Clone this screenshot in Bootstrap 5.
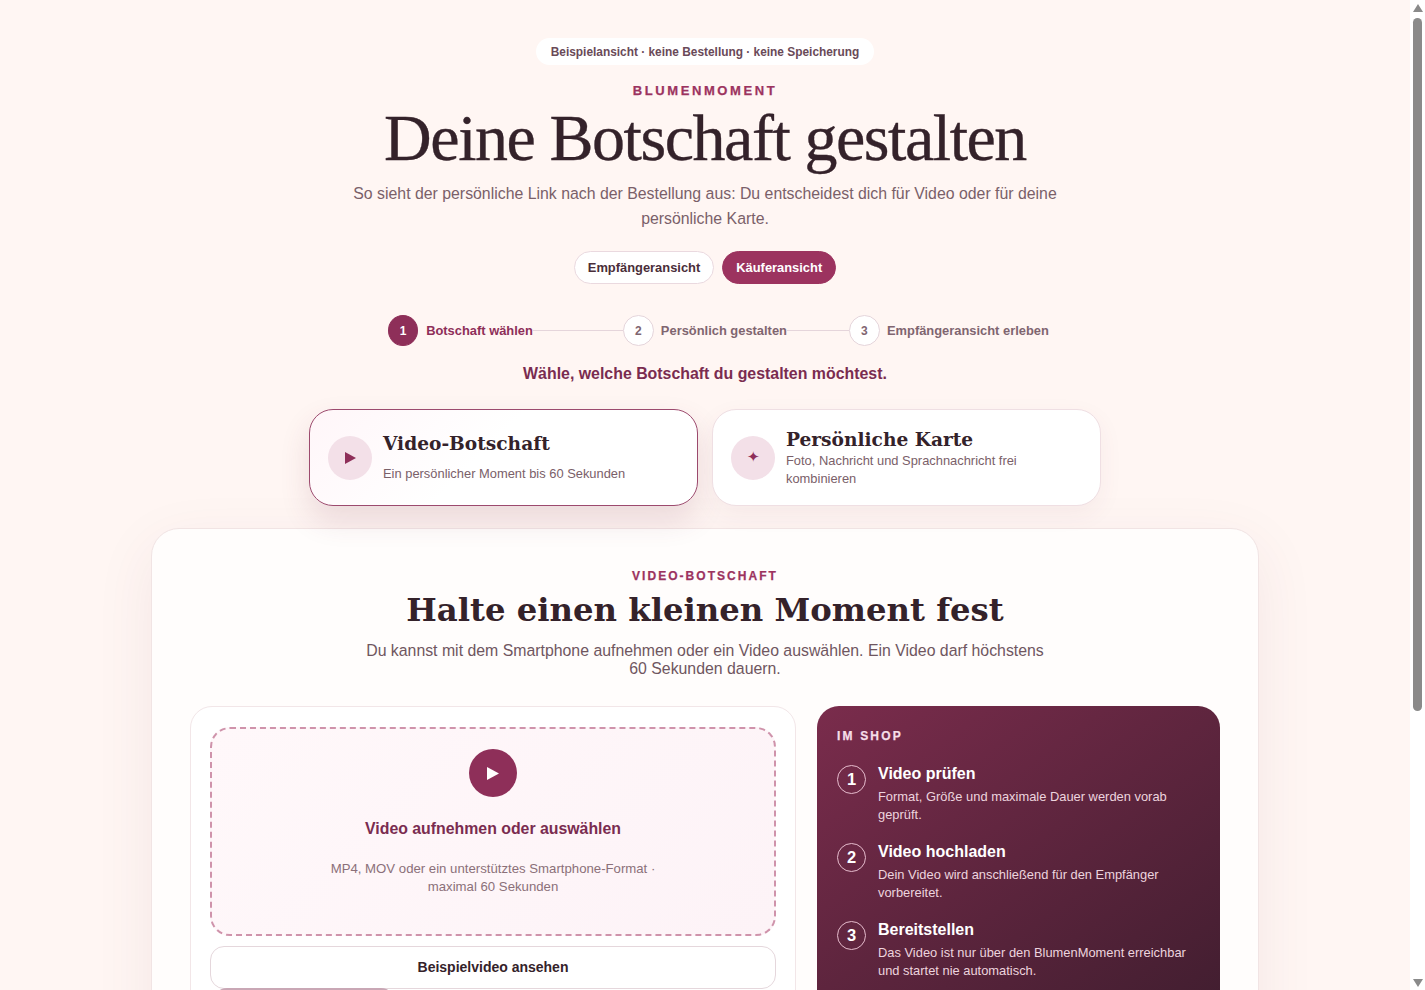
<!DOCTYPE html>
<html lang="de">
<head>
<meta charset="utf-8">
<title>Deine Botschaft gestalten</title>
<link href="https://cdn.jsdelivr.net/npm/bootstrap@5.3.0/dist/css/bootstrap.min.css" rel="stylesheet">
<style>
body{background:#fff6f3;color:#34222a;font-family:"Liberation Sans",Arial,sans-serif;font-size:16px;padding-right:15px}
.fake-sb{position:fixed;top:0;right:0;bottom:0;width:15px;background:#fff}
.sb-thumb{position:absolute;left:3px;top:18px;width:9px;height:693px;border-radius:5px;background:#8a8a8a}
.sb-up,.sb-down{position:absolute;left:3px;width:0;height:0;border-left:5px solid transparent;border-right:5px solid transparent}
.sb-up{top:4px;border-bottom:8px solid #8a8a8a}
.sb-down{top:979px;border-top:8px solid #8a8a8a}
.pg{width:1108px;margin:0 auto;padding:38px 0 40px}
.sample-pill{background:#fff;border-radius:999px;color:#6a4a58;font-size:11.9px;font-weight:700;line-height:14px;padding:6.5px 15px}
.kicker{color:#9c335f;font-size:13px;font-weight:700;letter-spacing:.2em;line-height:15px;margin-top:18px;-webkit-text-stroke:.25px #9c335f}
.disp{font-family:"Liberation Serif",Georgia,serif;font-size:66px;font-weight:400;letter-spacing:-.022em;line-height:72px;color:#34222a;margin:4px 0 0;-webkit-text-stroke:.35px #34222a}
.lede{color:#7a6069;font-size:15.85px;line-height:24.5px;width:730px;margin:8px auto 0}
.tog{font-size:12.9px;font-weight:700;height:33px;line-height:17px;border-radius:999px;padding:7px 13px;border:1px solid #ead9df;background:#fff;color:#4a2e39}
.tog-on{background:#9c335f;border-color:#9c335f;color:#fff}
.togs{margin-top:20px}
.stps{margin-top:31px;padding-left:27px}
.stp{color:#7f6570;font-size:12.9px;font-weight:700;white-space:nowrap;gap:7px}
.stp-num{width:31px;height:31px;border-radius:50%;border:1px solid #e5d5db;background:#fff;display:flex;align-items:center;justify-content:center;font-size:12px;flex:none}
.stp-on{color:#8e2f59;gap:8px}
.stp-on .stp-num{background:#8e2f59;border-color:#8e2f59;color:#fff;width:30px}
.stp-line{height:1px;background:#e5d5db;flex:none}
.stp-line-a{width:90px}
.stp-line-b{width:62px}
.ask{color:#7a2c50;font-size:15.9px;font-weight:700;line-height:20px;margin-top:18px}
.pick-row{width:792px;margin:25px auto 0}
.pick{width:389px;height:97px;background:#fff;border:1px solid #efdfe3;border-radius:24px;padding:0 18px;box-shadow:0 8px 24px rgba(120,50,80,.06);gap:7px}
.pick-on{border-color:#9c4a6e;box-shadow:0 14px 30px rgba(120,50,80,.14);background:linear-gradient(135deg,#fff6f9,#fff 45%)}
.pick-ico{width:44px;height:44px;border-radius:50%;background:#f3e0e8;flex:none;color:#8e2f59;display:flex;align-items:center;justify-content:center;font-size:15px}
.pick-t{font-family:"DejaVu Serif",Georgia,serif;font-weight:700;font-size:18.6px;line-height:24px;color:#34222a}
.pick-d{color:#7a6069;font-size:12.9px;line-height:17.5px;max-width:260px}
.pick-gap{margin-top:9px}
.panel{background:#fffdfc;border:1px solid #f1e4e4;border-radius:28px;padding:40px 38px 40px;box-shadow:0 18px 60px rgba(120,50,80,.08);margin-top:22px}
.kick2{color:#9c335f;font-size:12px;font-weight:700;letter-spacing:.17em;line-height:14px;-webkit-text-stroke:.25px #9c335f}
.h2x{font-family:"DejaVu Serif",Georgia,serif;font-weight:700;font-size:32.3px;line-height:38px;color:#34222a;margin:8px 0 0}
.sub{color:#6f5660;font-size:15.85px;line-height:18px;width:690px;margin:13px auto 0}
.cols{display:grid;grid-template-columns:606px 403px;gap:21px;margin-top:28px}
.lc{background:#fff;border:1px solid #f2e6e8;border-radius:22px;padding:20px 19px}
.drop{height:209px;border:2px dashed #cf93ab;border-radius:20px;background:linear-gradient(135deg,#fff8fa,#fdf3f7);padding-top:20px}
.drop-ico{width:48px;height:48px;border-radius:50%;background:#8e2f59;display:flex;align-items:center;justify-content:center}
.drop-t{color:#7a2c50;font-size:15.85px;font-weight:700;line-height:20px;margin-top:22px}
.drop-d{color:#8b7079;font-size:13.2px;line-height:18px;width:340px;margin-top:21px}
.ghost{display:block;width:100%;height:43px;background:#fff;border:1px solid #e5d7dc;border-radius:14px;color:#34222a;font-size:14px;font-weight:700;margin-top:10px}
.next-btn{width:182px;height:330px;background:#c9a7b5;border-radius:14px;margin:-1px 0 0 3px}
.rc{background:linear-gradient(145deg,#7a2c4c,#3a1c2c 72%);border-radius:22px;color:#fff;padding:23px 20px}
.rc-k{font-size:12px;font-weight:700;letter-spacing:.18em;color:#f6dfe8;line-height:14px;margin-bottom:21px;-webkit-text-stroke:.25px #f6dfe8}
.rc-n{width:29px;height:29px;border-radius:50%;border:1px solid #e6bccd;display:flex;align-items:center;justify-content:center;font-size:16.5px;font-weight:700;flex:none;margin-top:1px}
.rc-t{font-size:16px;font-weight:700;line-height:20px}
.rc-d{font-size:12.9px;line-height:18px;color:#edd4de;margin-top:4px}
.rc-i{height:78px;gap:12px}
</style>
</head>
<body>
<div class="pg">
  <div class="text-center"><span class="sample-pill d-inline-block">Beispielansicht · keine Bestellung · keine Speicherung</span></div>
  <div class="kicker text-center">BLUMENMOMENT</div>
  <h1 class="disp text-center">Deine Botschaft gestalten</h1>
  <p class="lede text-center mb-0">So sieht der persönliche Link nach der Bestellung aus: Du entscheidest dich für Video oder für deine persönliche Karte.</p>
  <div class="togs d-flex justify-content-center gap-2">
    <button type="button" class="tog">Empfängeransicht</button>
    <button type="button" class="tog tog-on">Käuferansicht</button>
  </div>
  <div class="stps d-flex justify-content-center align-items-center">
    <div class="stp stp-on d-flex align-items-center"><span class="stp-num">1</span>Botschaft wählen</div>
    <span class="stp-line stp-line-a"></span>
    <div class="stp d-flex align-items-center"><span class="stp-num">2</span>Persönlich gestalten</div>
    <span class="stp-line stp-line-b"></span>
    <div class="stp d-flex align-items-center"><span class="stp-num">3</span>Empfängeransicht erleben</div>
  </div>
  <div class="ask text-center">Wähle, welche Botschaft du gestalten möchtest.</div>
  <div class="pick-row d-flex justify-content-between">
    <div class="pick pick-on d-flex align-items-center">
      <span class="pick-ico"><svg width="11" height="12" viewBox="0 0 11 12"><path d="M0 0L11 6L0 12Z" fill="#8e2f59"/></svg></span>
      <div class="ps-1"><div class="pick-t">Video-Botschaft</div><div class="pick-d pick-gap">Ein persönlicher Moment bis 60 Sekunden</div></div>
    </div>
    <div class="pick d-flex align-items-center">
      <span class="pick-ico">✦</span>
      <div class="ps-1"><div class="pick-t">Persönliche Karte</div><div class="pick-d">Foto, Nachricht und Sprachnachricht frei kombinieren</div></div>
    </div>
  </div>
  <section class="panel">
    <div class="kick2 text-center">VIDEO-BOTSCHAFT</div>
    <h2 class="h2x text-center">Halte einen kleinen Moment fest</h2>
    <p class="sub text-center mb-0">Du kannst mit dem Smartphone aufnehmen oder ein Video auswählen. Ein Video darf höchstens 60 Sekunden dauern.</p>
    <div class="cols">
      <div class="lc">
        <div class="drop d-flex flex-column align-items-center text-center">
          <span class="drop-ico"><svg width="12" height="13" viewBox="0 0 12 13"><path d="M0 0L12 6.5L0 13Z" fill="#fff"/></svg></span>
          <div class="drop-t">Video aufnehmen oder auswählen</div>
          <div class="drop-d">MP4, MOV oder ein unterstütztes Smartphone-Format · maximal 60 Sekunden</div>
        </div>
        <button type="button" class="ghost">Beispielvideo ansehen</button>
        <div class="next-btn"></div>
      </div>
      <aside class="rc">
        <div class="rc-k">IM SHOP</div>
        <div class="rc-i d-flex"><span class="rc-n">1</span><div><div class="rc-t">Video prüfen</div><div class="rc-d">Format, Größe und maximale Dauer werden vorab geprüft.</div></div></div>
        <div class="rc-i d-flex"><span class="rc-n">2</span><div><div class="rc-t">Video hochladen</div><div class="rc-d">Dein Video wird anschließend für den Empfänger vorbereitet.</div></div></div>
        <div class="rc-i d-flex"><span class="rc-n">3</span><div><div class="rc-t">Bereitstellen</div><div class="rc-d">Das Video ist nur über den BlumenMoment erreichbar und startet nie automatisch.</div></div></div>
      </aside>
    </div>
  </section>
</div>
<div class="fake-sb" aria-hidden="true"><span class="sb-up"></span><span class="sb-thumb"></span><span class="sb-down"></span></div>
<script src="https://cdn.jsdelivr.net/npm/bootstrap@5.3.0/dist/js/bootstrap.bundle.min.js"></script>
</body>
</html>
